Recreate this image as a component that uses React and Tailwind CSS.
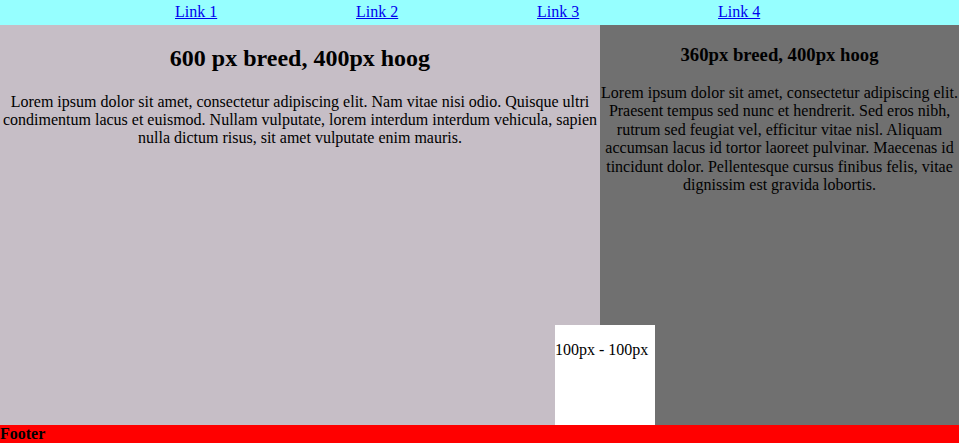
import React from "react";

const links = ["Link 1", "Link 2", "Link 3", "Link 4"];

export default function App() {
  return (
    <div className="font-['Liberation_Serif',serif] text-base text-black">
      <nav className="flex h-[25px] bg-[#96ffff] pl-[175px]">
        {links.map((l) => (
          <div key={l} className="w-[181px]">
            <a href="#" className="text-[#0000ee] underline">
              {l}
            </a>
          </div>
        ))}
      </nav>
      <main className="relative flex h-[400px]">
        <section className="w-[600px] bg-[#c6bec6] text-center">
          <h2 className="my-[20px] text-[24px] font-bold leading-[27.6px]">600 px breed, 400px hoog</h2>
          <p className="my-4 leading-[18.4px]">
            Lorem ipsum dolor sit amet, consectetur adipiscing elit. Nam vitae nisi odio. Quisque ultri
            condimentum lacus et euismod. Nullam vulputate, lorem interdum interdum vehicula, sapien
            nulla dictum risus, sit amet vulputate enim mauris.
          </p>
        </section>
        <section className="flex-1 bg-[#707070] text-center">
          <h3 className="my-[18.7px] text-[18.7px] font-bold leading-[21.5px]">360px breed, 400px hoog</h3>
          <p className="my-4 leading-[18.4px]">
            Lorem ipsum dolor sit amet, consectetur adipiscing elit. Praesent tempus sed nunc et hendrerit.
            Sed eros nibh, rutrum sed feugiat vel, efficitur vitae nisl. Aliquam accumsan lacus id tortor
            laoreet pulvinar. Maecenas id tincidunt dolor. Pellentesque cursus finibus felis, vitae
            dignissim est gravida lobortis.
          </p>
        </section>
        <div className="absolute bottom-0 left-[555px] h-[100px] w-[100px] overflow-hidden bg-white">
          <p className="my-4 whitespace-nowrap leading-[18.4px]">100px - 100px</p>
        </div>
      </main>
      <footer className="h-[18px] bg-[#ff0000] font-bold leading-[18.4px]">Footer</footer>
    </div>
  );
}
